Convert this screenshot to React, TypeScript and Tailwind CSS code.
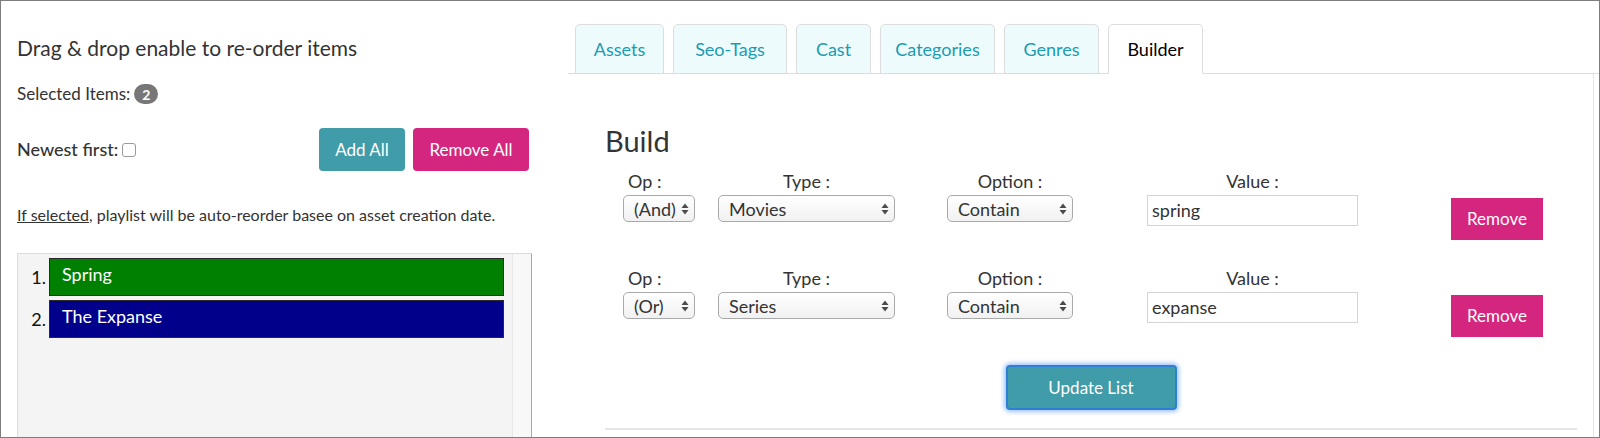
import React from "react";

const tabs = [
  { name: "Assets", w: "w-[89px]" },
  { name: "Seo-Tags", w: "w-[114px]" },
  { name: "Cast", w: "w-[75px]" },
  { name: "Categories", w: "w-[115px]" },
  { name: "Genres", w: "w-[95px]" },
  { name: "Builder", w: "w-[95px]" },
];

const Arrows = () => (
  <svg width="8" height="14" viewBox="0 0 8 14" className="shrink-0">
    <path d="M0.5 6 L4 1.5 L7.5 6 Z" fill="#4a4a4a" />
    <path d="M0.5 8 L4 12.5 L7.5 8 Z" fill="#4a4a4a" />
  </svg>
);

interface SelectProps {
  value: string;
  className: string;
}

const FakeSelect = ({ value, className }: SelectProps) => (
  <div
    className={`${className} h-[27px] flex items-center justify-between pl-[10px] pr-[5px] border border-[#a9a9a9] rounded-[5px] bg-gradient-to-b from-white to-[#f1f1f1] text-[18px] text-[#333] leading-none`}
  >
    <span>{value}</span>
    <Arrows />
  </div>
);

interface RowProps {
  op: string;
  type: string;
  value: string;
}

const BuildRow = ({ op, type, value }: RowProps) => (
  <div className="flex items-start h-[97px] pl-[18px] text-[18px] text-[#333]">
    {/* op */}
    <div className="w-[72px] flex flex-col">
      <div className="h-[22px] leading-[22px] pl-[5px]">Op :</div>
      <div className="mt-[3px]">
        <FakeSelect value={op} className="w-[72px]" />
      </div>
    </div>
    {/* type */}
    <div className="w-[177px] ml-[23px] flex flex-col">
      <div className="h-[22px] leading-[22px] text-center">Type :</div>
      <div className="mt-[3px]">
        <FakeSelect value={type} className="w-[177px]" />
      </div>
    </div>
    {/* option */}
    <div className="w-[126px] ml-[52px] flex flex-col">
      <div className="h-[22px] leading-[22px] text-center">Option :</div>
      <div className="mt-[3px]">
        <FakeSelect value="Contain" className="w-[126px]" />
      </div>
    </div>
    {/* value */}
    <div className="w-[211px] ml-[74px] flex flex-col">
      <div className="h-[22px] leading-[22px] text-center">Value :</div>
      <div className="mt-[3px] h-[31px] border border-[#d4d4d4] pl-[4px] flex items-center text-[18px] text-[#333]">
        {value}
      </div>
    </div>
    {/* remove */}
    <div className="ml-[93px] pt-[28px]">
      <button className="w-[92px] h-[42px] bg-[#d4267e] text-white text-[17px]">Remove</button>
    </div>
  </div>
);

export default function App() {
  return (
    <div className="w-[1600px] h-[438px] border border-[#7d7d7d] overflow-hidden bg-white flex font-['Lato',sans-serif] text-[#333]">
      {/* left side */}
      <div className="w-[531px] shrink-0 pl-4 pt-[33px]">
        <div className="text-[21px] leading-[28px]">Drag &amp; drop enable to re-order items</div>
        <div className="mt-[20px] h-[24px] flex items-center text-[17px]">
          <span>Selected Items:</span>
          <span className="ml-[4px] w-[24px] h-[20px] rounded-full bg-[#777] text-white text-[14px] font-bold flex items-center justify-center">
            2
          </span>
        </div>
        <div className="mt-[22px] h-[43px] flex items-center justify-between pr-[3px]">
          <div className="flex items-center text-[18px] font-medium">
            <span>Newest first:</span>
            <span className="ml-[4px] w-[14px] h-[14px] border border-[#9a9a9a] rounded-[3px] bg-white" />
          </div>
          <div className="flex gap-[8px]">
            <button className="w-[86px] h-[43px] rounded-[4px] bg-[#409ca9] text-white text-[17px]">Add All</button>
            <button className="w-[116px] h-[43px] rounded-[4px] bg-[#d4267e] text-white text-[17px]">Remove All</button>
          </div>
        </div>
        <div className="mt-[33px] text-[16px] leading-[22px]">
          <span className="underline">If selected</span>, playlist will be auto-reorder basee on asset creation date.
        </div>
        <div className="mt-[27px] h-[200px] flex bg-[#f4f4f4] border-t border-l border-[#dcdcdc] border-r border-r-[#a8a8a8]">
          <div className="flex-1 pt-[4px] pr-[8px] flex flex-col gap-[4px]">
            {[
              { n: "1.", label: "Spring", bg: "bg-[#008000]" },
              { n: "2.", label: "The Expanse", bg: "bg-[#00008b]" },
            ].map((it) => (
              <div key={it.n} className="flex items-start">
                <div className="w-[31px] pt-[8px] pr-[3px] text-right text-[18px] leading-[22px] text-[#111]">{it.n}</div>
                <div className={`flex-1 h-[38px] border border-[#2a2a2a] ${it.bg} text-white text-[18px] leading-[26px] pt-[2px] pl-[12px]`}>
                  {it.label}
                </div>
              </div>
            ))}
          </div>
          <div className="w-[19px] bg-[#f8f8f8] border-l border-[#e8e8e8]" />
        </div>
      </div>

      {/* right side */}
      <div className="flex-1 pl-[36px] pt-[23px] flex flex-col">
        <div className="flex gap-[9px] pl-[7px] border-b border-[#dddddd]">
          {tabs.map((t) => (
            <div
              key={t.name}
              className={
                t.name === "Builder"
                  ? `${t.w} h-[50px] -mb-px flex items-center justify-center rounded-t-[5px] border border-[#dddddd] border-b-white bg-white text-black text-[18px]`
                  : `${t.w} h-[50px] -mb-px flex items-center justify-center rounded-t-[5px] border border-[#dddddd] bg-[#edfbfd] text-[#1a9cb1] text-[18px]`
              }
            >
              {t.name}
            </div>
          ))}
        </div>
        <div className="flex-1 mr-[5px] border-r border-[#e6e6e6] pl-[37px] pr-[16px] pt-[49px]">
          <div className="text-[29px] leading-[36px] text-[#333]">Build</div>
          <div className="mt-[11px]">
            <BuildRow op="(And)" type="Movies" value="spring" />
            <BuildRow op="(Or)" type="Series" value="expanse" />
          </div>
          <div className="flex justify-center mt-[1px]">
            <button className="w-[171px] h-[45px] rounded-[4px] bg-[#409ca9] border-2 border-[#2f7fd6] shadow-[0_0_4px_2px_rgba(80,150,240,0.55)] text-white text-[17px]">
              Update List
            </button>
          </div>
          <div className="mt-[18px] h-[2px] bg-[#e6e6e6]" />
        </div>
      </div>
    </div>
  );
}
